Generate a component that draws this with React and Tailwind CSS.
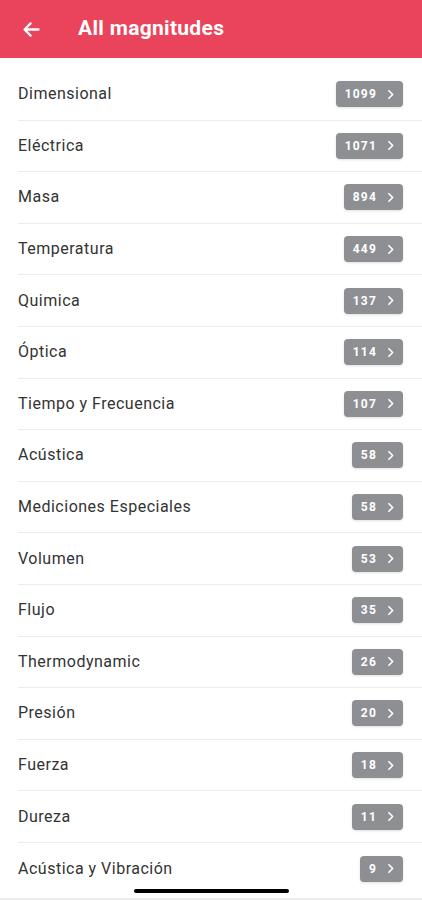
import React from 'react';

const items = [
  ['Dimensional', 1099],
  ['Eléctrica', 1071],
  ['Masa', 894],
  ['Temperatura', 449],
  ['Quimica', 137],
  ['Óptica', 114],
  ['Tiempo y Frecuencia', 107],
  ['Acústica', 58],
  ['Mediciones Especiales', 58],
  ['Volumen', 53],
  ['Flujo', 35],
  ['Thermodynamic', 26],
  ['Presión', 20],
  ['Fuerza', 18],
  ['Dureza', 11],
  ['Acústica y Vibración', 9],
];

const Chevron = () => (
  <svg width="13" height="13" viewBox="0 0 24 24" fill="none" stroke="currentColor" strokeWidth="3" strokeLinecap="round" strokeLinejoin="round">
    <path d="M9 5l7 7-7 7" />
  </svg>
);

const App = () => {
  return (
    <div className="w-[422px] h-[900px] bg-white flex flex-col overflow-hidden relative" style={{ fontFamily: 'Roboto, "Liberation Sans", sans-serif' }}>
      <div className="h-[58px] bg-[#e9445b] flex items-center shrink-0">
        <div className="w-[78px] pl-[21px] flex items-center">
          <svg width="21" height="21" viewBox="0 0 24 24" fill="none" stroke="white" strokeWidth="2.6" strokeLinecap="round" strokeLinejoin="round">
            <path d="M20 12H5" />
            <path d="M11 5l-7 7 7 7" />
          </svg>
        </div>
        <h1 className="text-white text-[21px] font-bold tracking-[0.3px]">All magnitudes</h1>
      </div>
      <ul className="pt-[11px] pl-[18px]">
        {items.map(([name, count], i) => (
          <li key={name} className={`h-[51.6px] flex items-center pr-[19px] ${i < items.length - 1 ? 'border-b border-[#ececec]' : ''}`}>
            <span className="flex-1 text-[16px] tracking-[0.5px] text-[#333333]">{name}</span>
            <span className="h-[26px] rounded-[4px] bg-[#8e8f93] text-white flex items-center gap-[7px] pl-[9px] pr-[6px] shadow-sm">
              <span className="text-[12px] font-bold tracking-[1.2px]">{count}</span>
              <Chevron />
            </span>
          </li>
        ))}
      </ul>
      <div className="absolute left-[134px] bottom-[7px] w-[155px] h-[4px] rounded-full bg-black" />
      <div className="absolute left-0 right-0 bottom-0 h-[2px] bg-[#ececec]" />
    </div>
  );
};

export default App;
